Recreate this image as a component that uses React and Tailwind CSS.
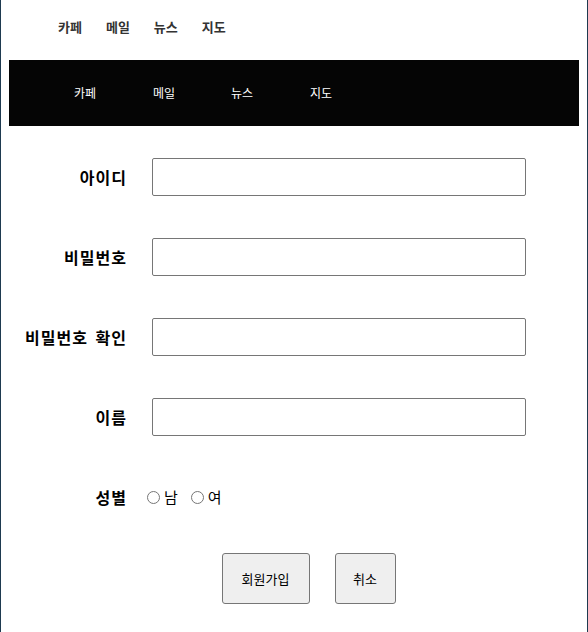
export default function App() {
  const font = { fontFamily: '"Noto Sans CJK KR", "Noto Sans", sans-serif' };
  const rows = ["아이디", "비밀번호", "비밀번호 확인", "이름"];
  return (
    <div style={font} className="w-[588px] h-[632px] bg-white border-l border-r border-[#1e3a50] overflow-hidden">
      <div className="h-[60px] flex items-center pb-[6px] pl-[57px] gap-[24px] text-[13px] font-bold text-[#333]">
        <span>카페</span>
        <span>메일</span>
        <span>뉴스</span>
        <span>지도</span>
      </div>
      <div className="mx-[8px] h-[66px] bg-[#050505] flex items-center pl-[65px] text-[12px] text-white">
        <span className="w-[79px]">카페</span>
        <span className="w-[78px]">메일</span>
        <span className="w-[79px]">뉴스</span>
        <span className="w-[79px]">지도</span>
      </div>
      <div className="flex flex-col gap-[42px] mt-[32px]">
        {rows.map((r) => (
          <div key={r} className="flex items-center h-[38px]">
            <div className="w-[126px] text-right text-[16px] font-semibold text-black tracking-[1px] [word-spacing:3px]">{r}</div>
            <input type="text" className="ml-[25px] w-[374px] h-[38px] border border-[#767676] rounded-[2px] bg-white" />
          </div>
        ))}
        <div className="flex items-center h-[38px]">
          <div className="w-[126px] text-right text-[16px] font-semibold text-black tracking-[1px]">성별</div>
          <label className="ml-[20px] flex items-center text-[15px] text-black">
            <input type="radio" name="g" className="w-[13px] h-[13px] mr-[4px]" />
            남
          </label>
          <label className="ml-[13px] flex items-center text-[15px] text-black">
            <input type="radio" name="g" className="w-[13px] h-[13px] mr-[4px]" />
            여
          </label>
        </div>
      </div>
      <div className="flex justify-center gap-[25px] mt-[37px] pl-[29px]">
        <button className="w-[88px] h-[51px] bg-[#efefef] border border-[#767676] rounded-[3px] text-[13px] text-black">회원가입</button>
        <button className="w-[61px] h-[51px] bg-[#efefef] border border-[#767676] rounded-[3px] text-[13px] text-black">취소</button>
      </div>
    </div>
  );
}
